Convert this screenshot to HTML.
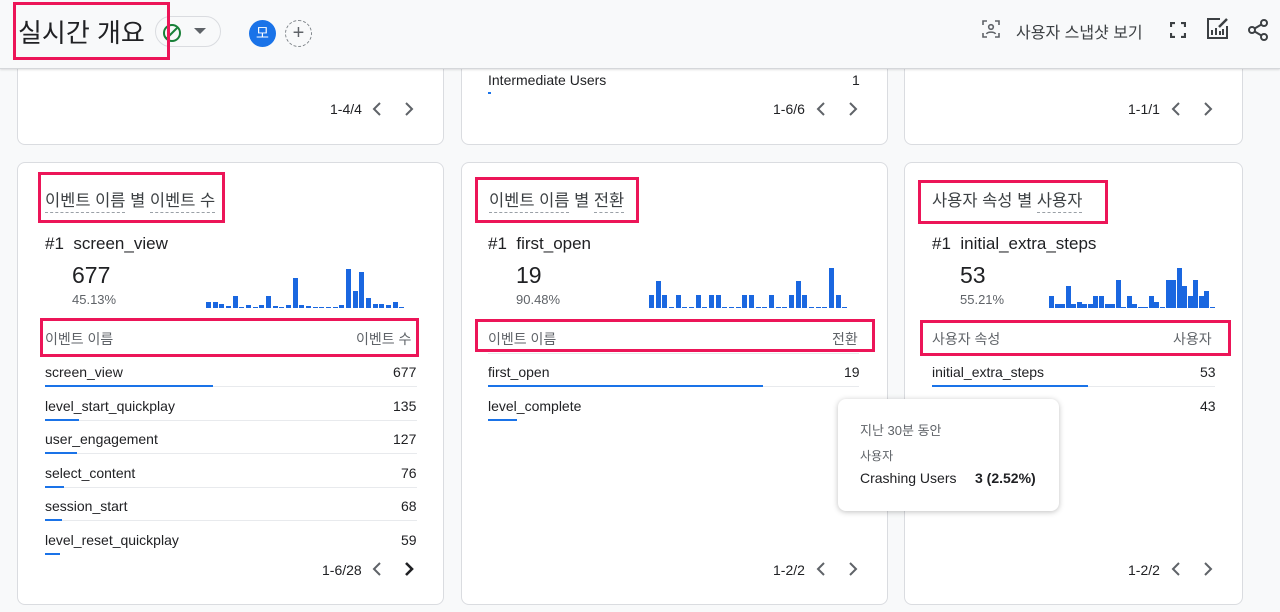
<!DOCTYPE html>
<html><head><meta charset="utf-8"><style>
*{margin:0;padding:0;box-sizing:border-box}
body{width:1280px;height:612px;overflow:hidden;background:#f8f9fa;font-family:"Liberation Sans","Noto Sans CJK KR",sans-serif;color:#202124;position:relative}
.a{position:absolute}
.hdr{left:0;top:0;width:1280px;height:69px;background:#f8f9fa;border-bottom:1px solid #d5d7da;box-shadow:0 1px 2px rgba(0,0,0,.12);z-index:2}
.card{background:#fff;border:1px solid #dadce0;border-radius:8px}
.red{border:3px solid #ec1558}
.t14{font-size:14px}
.gray{color:#5f6368}
.dash{border-bottom:1px dashed #9aa0a6;padding-bottom:2px}
.row{font-size:14px}
.line{height:1px;background:#e8eaed}
.bl{height:2px;background:#1a73e8}
.bar{position:absolute;bottom:0;width:5px;background:#1a67e0;}
</style></head><body>
<svg width="0" height="0" style="position:absolute"><defs>
<symbol id="lt" viewBox="0 0 12 16"><path d="M9 2L3 8l6 6" fill="none" stroke="#5f6368" stroke-width="2"/></symbol>
<symbol id="rt" viewBox="0 0 12 16"><path d="M3 2l6 6-6 6" fill="none" stroke="#5f6368" stroke-width="2"/></symbol>
<symbol id="rtb" viewBox="0 0 12 16"><path d="M3 2l6 6-6 6" fill="none" stroke="#202124" stroke-width="2.6"/></symbol>
</defs></svg>
<div class="a hdr">
 <div class="a" style="left:18px;top:13px;font-size:26px;color:#202124">실시간 개요</div>
 <div class="a" style="left:155px;top:16px;width:66px;height:31px;border:1px solid #dadce0;border-radius:16px"></div>
 <svg class="a" style="left:162px;top:23px" width="20" height="20" viewBox="0 0 20 20"><circle cx="10" cy="10" r="8" fill="none" stroke="#188038" stroke-width="2"/><line x1="5" y1="15" x2="15" y2="5" stroke="#188038" stroke-width="2"/></svg>
 <svg class="a" style="left:194px;top:28px" width="12" height="7"><path d="M0 0h12L6 6z" fill="#5f6368"/></svg>
 <div class="a" style="left:249px;top:20px;width:27px;height:27px;border-radius:50%;background:#1a73e8;color:#fff;font-size:14px;text-align:center;line-height:27px">모</div>
 <div class="a" style="left:285px;top:20px;width:27px;height:27px;border-radius:50%;border:1px dashed #80868b;color:#5f6368;font-size:20px;text-align:center;line-height:24px">+</div>
 <svg class="a" style="left:982px;top:20px" width="18" height="18" viewBox="0 0 18 18" fill="none" stroke="#5f6368" stroke-width="1.6"><path d="M1 5V1h4M13 1h4v4M17 13v4h-4M5 17H1v-4"/><circle cx="9" cy="7" r="2.3"/><path d="M4.5 14c1-2.5 8-2.5 9 0"/></svg>
 <div class="a" style="left:1016px;top:19px;font-size:16px;color:#3c4043">사용자 스냅샷 보기</div>
 <svg class="a" style="left:1170px;top:22px" width="16" height="16" fill="none" stroke="#3c4043" stroke-width="2.2"><path d="M1 5V1h4M11 1h4v4M15 11v4h-4M5 15H1v-4"/></svg>
 <svg class="a" style="left:1206px;top:17px" width="23" height="23" viewBox="0 0 23 23" fill="none" stroke="#3c4043" stroke-width="2"><path d="M14 2H2v19h19V9"/><path d="M6 18v-5M10 18v-7M14 18v-4M17 18v-6" /><path d="M13 10l8-8" stroke-width="2.5"/></svg>
 <svg class="a" style="left:1247px;top:19px" width="22" height="22" viewBox="0 0 22 22" fill="none" stroke="#3c4043" stroke-width="2"><circle cx="17" cy="4" r="3"/><circle cx="5" cy="11" r="3"/><circle cx="17" cy="18" r="3"/><path d="M7.6 9.5l6.8-4M7.6 12.5l6.8 4"/></svg>
</div>
<div class="a red" style="left:13px;top:2px;width:157px;height:58px;z-index:3"></div>

<!-- top row cards -->
<div class="a card" style="left:17px;top:50px;width:427px;height:95px"></div>
<div class="a t14" style="left:330px;top:101px">1-4/4</div>
<svg class="a" style="left:371px;top:101px" width="12" height="16"><use href="#lt"/></svg><svg class="a" style="left:403px;top:101px" width="12" height="16"><use href="#rt"/></svg>
<div class="a card" style="left:461px;top:50px;width:427px;height:95px"></div>
<div class="a t14" style="left:488px;top:72px">Intermediate Users</div>
<div class="a t14" style="left:852px;top:72px">1</div>
<div class="a" style="left:488px;top:92px;width:3px;height:2px;background:#1a73e8"></div>
<div class="a t14" style="left:773px;top:101px">1-6/6</div>
<svg class="a" style="left:815px;top:101px" width="12" height="16"><use href="#lt"/></svg><svg class="a" style="left:847px;top:101px" width="12" height="16"><use href="#rt"/></svg>
<div class="a card" style="left:904px;top:50px;width:339px;height:95px"></div>
<div class="a t14" style="left:1128px;top:101px">1-1/1</div>
<svg class="a" style="left:1170px;top:101px" width="12" height="16"><use href="#lt"/></svg><svg class="a" style="left:1202px;top:101px" width="12" height="16"><use href="#rt"/></svg>

<!-- card 1 -->
<div class="a card" style="left:17px;top:162px;width:427px;height:443px"></div>
<div class="a" style="left:45px;top:187px;font-size:16.5px;color:#3c4043"><span class="dash">이벤트 이름</span> 별 <span class="dash">이벤트 수</span></div>
<div class="a red" style="left:38px;top:172px;width:187px;height:51px"></div>
<div class="a" style="left:45px;top:234px;font-size:17px">#1&nbsp; screen_view</div>
<div class="a" style="left:72px;top:262px;font-size:23px">677</div>
<div class="a gray" style="left:72px;top:292px;font-size:13px">45.13%</div>
<div class="a" id="c1" style="left:206px;top:260px;width:200px;height:48px"></div>
<div class="a red" style="left:40px;top:318px;width:379px;height:39px"></div>
<div class="a gray t14" style="left:45px;top:329px">이벤트 이름</div>
<div class="a gray t14" style="left:356px;top:329px">이벤트 수</div>

<!-- card 2 -->
<div class="a card" style="left:461px;top:162px;width:427px;height:443px"></div>
<div class="a" style="left:489px;top:187px;font-size:16.5px;color:#3c4043"><span class="dash">이벤트 이름</span> 별 <span class="dash">전환</span></div>
<div class="a red" style="left:475px;top:177px;width:164px;height:46px"></div>
<div class="a" style="left:488px;top:234px;font-size:17px">#1&nbsp; first_open</div>
<div class="a" style="left:516px;top:262px;font-size:23px">19</div>
<div class="a gray" style="left:516px;top:292px;font-size:13px">90.48%</div>
<div class="a" id="c2" style="left:649px;top:260px;width:200px;height:48px"></div>
<div class="a red" style="left:475px;top:319px;width:400px;height:33px"></div>
<div class="a gray t14" style="left:488px;top:329px">이벤트 이름</div>
<div class="a gray t14" style="left:832px;top:329px">전환</div>
<div class="a line" style="left:488px;top:353px;width:371px"></div>
<div class="a row" style="left:488px;top:364px">first_open</div><div class="a row" style="left:844px;top:364px">19</div>
<div class="a bl" style="left:488px;top:385px;width:275px"></div><div class="a line" style="left:763px;top:386px;width:96px"></div>
<div class="a row" style="left:488px;top:398px">level_complete</div>
<div class="a bl" style="left:488px;top:419px;width:29px"></div>
<div class="a t14" style="left:773px;top:562px">1-2/2</div>
<svg class="a" style="left:815px;top:561px" width="12" height="16"><use href="#lt"/></svg><svg class="a" style="left:847px;top:561px" width="12" height="16"><use href="#rt"/></svg>

<!-- card 3 -->
<div class="a card" style="left:904px;top:162px;width:339px;height:443px"></div>
<div class="a" style="left:932px;top:187px;font-size:16.5px;color:#3c4043">사용자 속성 별 <span class="dash">사용자</span></div>
<div class="a red" style="left:918px;top:180px;width:190px;height:44px"></div>
<div class="a" style="left:932px;top:234px;font-size:17px">#1&nbsp; initial_extra_steps</div>
<div class="a" style="left:960px;top:262px;font-size:23px">53</div>
<div class="a gray" style="left:960px;top:292px;font-size:13px">55.21%</div>
<div class="a" id="c3" style="left:1049px;top:260px;width:170px;height:48px"></div>
<div class="a red" style="left:920px;top:320px;width:311px;height:36px"></div>
<div class="a gray t14" style="left:932px;top:329px">사용자 속성</div>
<div class="a gray t14" style="left:1173px;top:329px">사용자</div>
<div class="a row" style="left:932px;top:364px">initial_extra_steps</div><div class="a row" style="left:1200px;top:364px">53</div>
<div class="a bl" style="left:932px;top:385px;width:156px"></div><div class="a line" style="left:1088px;top:386px;width:127px"></div>
<div class="a row" style="left:1200px;top:398px">43</div>
<div class="a t14" style="left:1128px;top:562px">1-2/2</div>
<svg class="a" style="left:1170px;top:561px" width="12" height="16"><use href="#lt"/></svg><svg class="a" style="left:1202px;top:561px" width="12" height="16"><use href="#rt"/></svg>

<!-- card1 rows -->
<div id="rows"></div>
<div class="a t14" style="left:322px;top:562px">1-6/28</div>
<svg class="a" style="left:371px;top:561px" width="12" height="16"><use href="#lt"/></svg><svg class="a" style="left:403px;top:561px" width="12" height="16"><use href="#rtb"/></svg>

<!-- tooltip -->
<div class="a" style="left:838px;top:399px;width:221px;height:112px;background:#fff;border-radius:8px;box-shadow:0 1px 6px rgba(0,0,0,.25)">
 <div class="a gray" style="left:22px;top:21px;font-size:13px">지난 30분 동안</div>
 <div class="a gray" style="left:22px;top:48px;font-size:12px">사용자</div>
 <div class="a" style="left:22px;top:71px;font-size:14px">Crashing Users</div>
 <div class="a" style="left:137px;top:71px;font-size:14px;font-weight:bold">3 (2.52%)</div>
</div>
<script>
function bars(id,h,step){var e=document.getElementById(id);h.forEach(function(v,i){var b=document.createElement('div');b.className='bar';b.style.left=(i*step)+'px';b.style.height=Math.max(v,1)+'px';e.appendChild(b)})}
bars('c1',[6,6,4,2,12,1,3,1,3,12,2,1,3,30,3,2,1,1,1,1,3,39,17,36,10,4,4,3,6,1],6.67);
bars('c2',[13,27,13,1,13,1,1,13,1,13,13,1,1,1,13,13,1,1,13,1,1,13,27,13,1,1,1,40,13,1],6.67);
bars('c3',[12,4,4,22,4,6,4,4,12,12,4,4,28,1,12,4,1,1,12,6,1,28,28,40,22,12,28,12,17,1],5.55);
var r=[["screen_view","677",168],["level_start_quickplay","135",34],["user_engagement","127",32],["select_content","76",19],["session_start","68",17],["level_reset_quickplay","59",15]];
var h='';r.forEach(function(x,i){var y=364+i*33.6;h+='<div class="a row" style="left:45px;top:'+y+'px">'+x[0]+'</div><div class="a row" style="left:'+(417-x[1].length*8)+'px;top:'+y+'px">'+x[1]+'</div><div class="a bl" style="left:45px;top:'+(y+21)+'px;width:'+x[2]+'px"></div>'+(i<5?'<div class="a line" style="left:'+(45+x[2])+'px;top:'+(y+22)+'px;width:'+(372-x[2])+'px"></div>':'');});
document.getElementById('rows').innerHTML=h;
</script>
</body></html>
